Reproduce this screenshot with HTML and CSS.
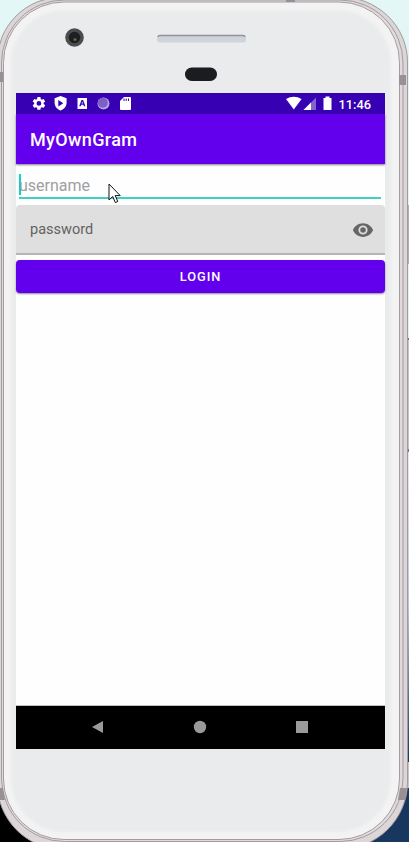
FILE: index.html
```html
<!DOCTYPE html>
<html lang="en">
<head>
<meta charset="utf-8">
<title>MyOwnGram</title>
<link rel="stylesheet" href="styles.css">
</head>
<body>
<div class="desktop">
  <svg class="frame" width="409" height="842" viewBox="0 0 409 842">
    <defs>
      <filter id="soft" x="-10%" y="-10%" width="120%" height="120%"><feGaussianBlur stdDeviation="1.800"/></filter>
      <clipPath id="face"><rect x="4" y="2.500" width="395" height="836" rx="60"/></clipPath>
      <linearGradient id="edge" x1="0" y1="0" x2="0" y2="1"><stop offset="0" stop-color="#e5e9ee"/><stop offset=".5" stop-color="#b9c5d2"/><stop offset="1" stop-color="#17375f"/></linearGradient>
    </defs>
    <rect x="406" y="452" width="3" height="310" fill="url(#edge)"/>
    <rect x="406" y="205" width="3" height="59" fill="#b3adb0"/>
    <rect x="406" y="338" width="3" height="114" fill="#c9c4c7"/>
    <rect x="406" y="338" width="3" height="2" fill="#77757a"/>
    <rect x="406" y="449" width="3" height="3" fill="#77757a"/>
    <rect x="406" y="762" width="3" height="26" fill="#c9c4c7"/>
    <path d="M-3 62A65 65 0 0 1 62-3H340A67 65 0 0 1 407.500 62V782A67.500 67 0 0 1 340 849H62A65 67 0 0 1-3 782z" fill="#dcd6d8" stroke="#a39b9f"/>
    <rect x="1.500" y="0" width="401.500" height="841.500" rx="63" fill="#e0dadd" stroke="#a39b9e"/>
    <rect x="3.500" y="2" width="396" height="837.500" rx="60.500" fill="#f3f3f3" stroke="#a39c9f"/>
    <g clip-path="url(#face)"><rect x="11" y="10" width="380" height="822" rx="54" fill="#e9ebed" filter="url(#soft)"/></g>
    <g fill="#989094">
      <rect x="0" y="72" width="3" height="10"/>
      <rect x="286" y="0" width="9" height="2"/>
      <rect x="399" y="75" width="7" height="10"/>
      <path d="M0 788h3l2 12H0zM400 788h7l-2 12h-7z"/>
    </g>
    <circle cx="74.500" cy="37.500" r="9.300" fill="#4b4c50"/>
    <circle cx="74.500" cy="37.500" r="5.700" fill="#1d1e20"/>
    <circle cx="75" cy="39.500" r="1.500" fill="#6c6740"/>
    <rect x="157" y="35" width="89" height="7.500" rx="3" fill="#cfd4da"/>
    <path d="M158 37q0-1.500 2-1.500h83q2 0 2 1.500" fill="none" stroke="#8d939c" stroke-width="1.300"/>
    <rect x="185" y="67.500" width="32" height="13.500" rx="6.750" fill="#1b1c20"/>
  </svg>
  <main class="screen">
    <header class="status">
      <svg class="status-icons" width="369" height="21" viewBox="0 0 369 21" fill="#fff">
        <g transform="translate(15 2.500) scale(.66)"><path d="M19.140 12.940c.04-.3.060-.61.060-.94s-.020-.640-.070-.940l2.030-1.580c.18-.14.230-.41.120-.61l-1.920-3.320c-.12-.22-.37-.29-.59-.22l-2.390.96c-.5-.38-1.030-.7-1.620-.94l-.36-2.540c-.04-.24-.24-.41-.48-.41h-3.840c-.24 0-.43.17-.47.41l-.36 2.540c-.59.24-1.130.57-1.620.94l-2.390-.96c-.22-.08-.47 0-.59.22L2.740 8.870c-.12.21-.08.47.12.61l2.030 1.580c-.05.3-.09.63-.09.94s.02.64.07.94l-2.030 1.580c-.18.14-.23.41-.12.61l1.920 3.320c.12.22.37.29.59.22l2.390-.96c.5.38 1.030.7 1.620.94l.36 2.540c.05.24.24.41.48.41h3.840c.24 0 .44-.17.47-.41l.36-2.540c.59-.24 1.130-.56 1.620-.94l2.390.96c.22.08.47 0 .59-.22l1.920-3.320c.12-.22.07-.47-.12-.61zM12 15.600A3.600 3.600 0 1 1 12 8.400a3.600 3.600 0 0 1 0 7.200z"/></g>
        <path fill-rule="evenodd" d="M44.600 3l6 2.200v4.600c0 3.600-2.500 6.400-6 7.700-3.500-1.300-6-4.100-6-7.700V5.200zM42.300 7v6.400l5-3.200z"/>
        <path fill-rule="evenodd" d="M61.500 5h9.500v11h-9.500zM63.200 13.200h1.500l.5-1.500h2.200l.5 1.500h1.500L67.100 7h-1.600zM65.600 10.500l.7-2 .7 2z"/>
        <circle cx="87.500" cy="10.500" r="6" fill="#b8a7df"/><circle cx="86.800" cy="9.800" r="5" fill="#7d5fca"/>
        <path fill-rule="evenodd" d="M108 4h6q1 0 1 1v11q0 1-1 1h-9q-1 0-1-1V8zM107.500 5.500v2.500h1V5.500zM109.700 5.500v2.500h1V5.500zM112 5.500v2.500h1V5.500z"/>
        <path d="M270 6q7.800-4.500 15.600 0L277.800 16.500z"/>
        <path d="M300 4.500V17H287.500z" fill="#8065ce"/><path d="M295 9.500V17h-7.500z"/>
        <path d="M307.500 5h2V3.500h4V5h2v12h-8z"/>
      </svg>
      <span class="clock">11:46</span>
    </header>
    <div class="toolbar"><h1>MyOwnGram</h1></div>
    <form class="login">
      <div class="username"><i class="caret"></i><span>username</span></div>
      <div class="password"><span>password</span>
        <svg width="22" height="22" viewBox="0 0 24 24" fill="#666"><path d="M12 4.500C7 4.500 2.730 7.610 1 12c1.730 4.390 6 7.500 11 7.500s9.270-3.110 11-7.500c-1.730-4.390-6-7.500-11-7.500zM12 17a5 5 0 1 1 0-10 5 5 0 0 1 0 10zm0-8a3 3 0 1 0 0 6 3 3 0 0 0 0-6z"/></svg>
      </div>
      <button class="submit" type="button">LOGIN</button>
    </form>
    <nav class="navbar">
      <svg width="369" height="43" viewBox="0 0 369 43" fill="#9b999a"><path d="M76 21l11-6v12z"/><circle cx="184" cy="21" r="6.200"/><rect x="280" y="15" width="12" height="12"/></svg>
    </nav>
  </main>
  <svg class="pointer" width="14" height="21" viewBox="0 0 14 21"><path d="M1 1v16l3.700-3.500L7.300 19.500l2.500-1L7.200 12.600h5z" fill="#fff" stroke="#111" stroke-width="1"/></svg>
</div>
</body>
</html>
```
FILE: styles.css
```css
* { box-sizing: border-box; }
body { margin: 0; font-family: Roboto, sans-serif; }
.desktop {
  position: relative;
  width: 409px;
  height: 842px;
  padding: 93px 24px 93px 16px;
  overflow: hidden;
  background:
    linear-gradient(#e3f8f6, #dceeee) 0 0 / 100% 450px no-repeat,
    linear-gradient(90deg, #000 50%, #17375f 50%);
}
.frame { position: absolute; left: 0; top: 0; }
.screen {
  position: relative;
  display: flex;
  flex-direction: column;
  width: 369px;
  height: 656px;
  background: #fefefe;
}
.status {
  display: flex;
  justify-content: flex-end;
  align-items: center;
  height: 21px;
  padding: 1px 14px 0 0;
  background: #3700b3;
}
.status-icons { position: absolute; left: 0; top: 0; }
.clock { color: #fff; font-size: 12.800px; font-weight: 500; line-height: 21px; }
.toolbar {
  display: flex;
  align-items: center;
  height: 50px;
  padding: 1px 14px 0;
  background: #6200ee;
  box-shadow: 0 1px 2px rgba(0, 0, 0, .5);
}
h1 { margin: 0; color: #fff; font-size: 18px; font-weight: 500; letter-spacing: .36px; }
.login { flex: 1; }
.username {
  display: flex;
  align-items: center;
  height: 34px;
  margin: 1px 4px 6px 3px;
  padding-top: 8px;
  border-bottom: 2px solid #3fcfc4;
  color: #a0a0a0;
  font-size: 16px;
}
.caret { width: 2px; height: 21px; margin: -1px -2px 0 0; background: #03dac5; }
.password {
  display: flex;
  align-items: center;
  justify-content: space-between;
  height: 50px;
  padding: 1px 11px 0 14px;
  border-bottom: 2px solid #b5b5b5;
  border-radius: 4px 4px 0 0;
  background: #dfdfdf;
  color: #626262;
  font-size: 14.500px;
}
.submit {
  display: block;
  width: 100%;
  height: 33px;
  margin: 5px 0 0;
  padding: 0;
  border: 0;
  border-radius: 4px;
  background: #6200ee;
  box-shadow: 0 1px 2px rgba(0, 0, 0, .45);
  color: #fff;
  font: 500 12.800px Roboto, sans-serif;
  letter-spacing: 1px;
}
.navbar { height: 43px; background: #000; box-shadow: 0 -1px 0 #bcc0c0; }
.pointer { position: absolute; left: 108px; top: 183px; }
```
